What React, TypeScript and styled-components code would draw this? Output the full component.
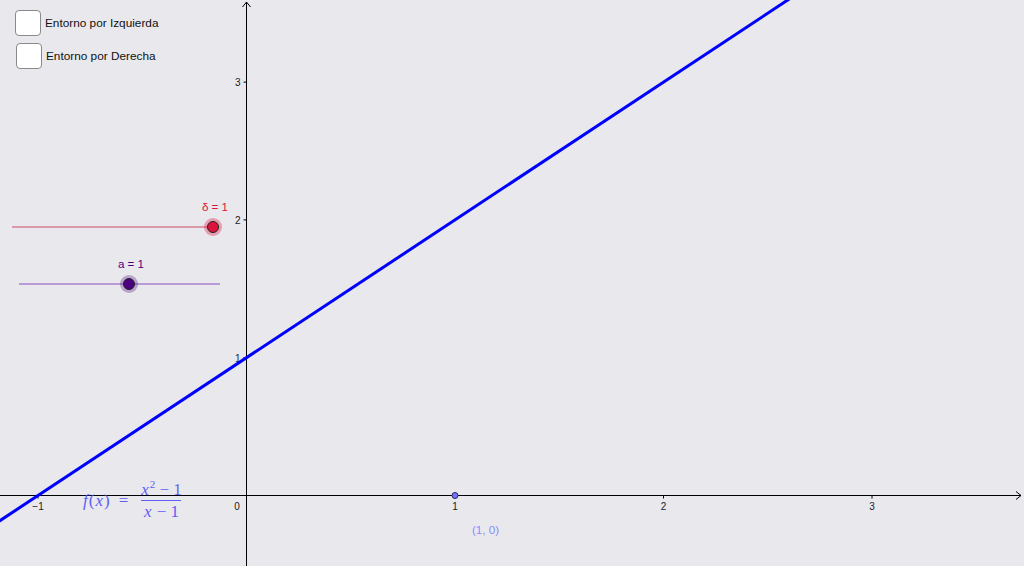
import React from 'react';
import styled, { createGlobalStyle } from 'styled-components';

const GlobalStyle = createGlobalStyle`
  html, body {
    margin: 0;
    padding: 0;
    background: #e9e8ed;
    overflow: hidden;
  }
  body {
    font-family: "Liberation Sans", Arial, sans-serif;
  }
`;

const W = 1024;
const H = 566;
const ox = 246.5;
const oy = 495.5;
const sx = 208.5;
const sy = 137.8;
const px = (x: number) => ox + x * sx;
const py = (y: number) => oy - y * sy;

const Canvas = styled.div`
  position: relative;
  width: ${W}px;
  height: ${H}px;
  background: #e9e8ed;
  overflow: hidden;
`;

const Graph = styled.svg`
  position: absolute;
  left: 0;
  top: 0;
  font-family: "Liberation Sans", Arial, sans-serif;
`;

const CheckList = styled.div`
  position: absolute;
  left: 15px;
  top: 10px;
  display: flex;
  flex-direction: column;
  gap: 7px;
`;

const CheckRow = styled.label<{ $shift?: number }>`
  display: flex;
  align-items: center;
  gap: 4px;
  margin-left: ${(p) => p.$shift ?? 0}px;
  font-size: 11.8px;
  color: #111;
`;

const Box = styled.span`
  width: 24px;
  height: 24px;
  border: 1.5px solid #8a8a8a;
  border-radius: 4px;
  background: #fff;
`;

const SliderBox = styled.div<{ $left: number; $top: number; $width: number }>`
  position: absolute;
  left: ${(p) => p.$left}px;
  top: ${(p) => p.$top}px;
  width: ${(p) => p.$width}px;
  height: 2px;
`;

const Track = styled.div<{ $color: string }>`
  width: 100%;
  height: 2px;
  background: ${(p) => p.$color};
`;

const Knob = styled.div<{ $fill: string; $halo: string }>`
  position: absolute;
  top: 1px;
  width: 12px;
  height: 12px;
  margin: -6px 0 0 -6px;
  border-radius: 50%;
  background: ${(p) => p.$fill};
  border: 1px solid #222;
  box-sizing: border-box;
  box-shadow: 0 0 0 3px ${(p) => p.$halo};
`;

const SliderLabel = styled.div<{ $color: string }>`
  position: absolute;
  top: -26px;
  transform: translateX(-50%);
  font-size: 11.6px;
  white-space: nowrap;
  color: ${(p) => p.$color};
`;

const Formula = styled.div`
  position: absolute;
  left: 82px;
  top: 481px;
  display: flex;
  align-items: center;
  font-family: "Liberation Serif", "DejaVu Serif", serif;
  font-size: 17px;
  color: #5f5ff4;
`;

const Var = styled.span`
  font-style: italic;
  margin: 0 1px;
`;

const Eq = styled.span`
  margin: 0 10px 0 9px;
`;

const Fraction = styled.span`
  display: inline-flex;
  flex-direction: column;
  align-items: center;
`;

const Num = styled.span`
  padding: 0 2px 2px;
  line-height: 17px;
`;

const Den = styled.span`
  border-top: 1px solid #5f5ff4;
  padding: 2px 2px 0;
  line-height: 17px;
`;

const Sup = styled.sup`
  font-size: 11px;
  font-style: normal;
  vertical-align: 7px;
  line-height: 0;
`;

const PointLabel = styled.div`
  position: absolute;
  left: 472px;
  top: 523px;
  font-size: 11.6px;
  color: #8a8aff;
`;

type SliderProps = {
  left: number;
  top: number;
  width: number;
  pos: number;
  label: string;
  color: string;
  track: string;
  halo: string;
};

const Slider: React.FC<SliderProps> = ({ left, top, width, pos, label, color, track, halo }) => (
  <SliderBox $left={left} $top={top} $width={width}>
    <Track $color={track} />
    <Knob $fill={color} $halo={halo} style={{ left: pos * width }} />
    <SliderLabel $color={color} style={{ left: pos * width + 2 }}>
      {label}
    </SliderLabel>
  </SliderBox>
);

const xTicks = [-1, 1, 2, 3];
const yTicks = [1, 2, 3];

const App: React.FC = () => {
  return (
    <>
      <GlobalStyle />
      <Canvas>
        <Graph width={W} height={H} viewBox={`0 0 ${W} ${H}`}>
          {/* axes */}
          <line x1={0} y1={oy} x2={1021} y2={oy} stroke="#000" strokeWidth={1} />
          <polyline points={`1016,${oy - 4} 1021,${oy} 1016,${oy + 4}`} fill="none" stroke="#000" strokeWidth={1} />
          <line x1={ox} y1={H} x2={ox} y2={2} stroke="#000" strokeWidth={1} />
          <polyline points={`${ox - 4},7 ${ox},2 ${ox + 4},7`} fill="none" stroke="#000" strokeWidth={1} />

          {xTicks.map((t) => (
            <g key={`x${t}`}>
              <line x1={px(t)} y1={oy} x2={px(t)} y2={oy + 3} stroke="#000" strokeWidth={1} />
              <text x={px(t)} y={oy + 14} fontSize={10} textAnchor="middle" fill="#222">
                {t < 0 ? `\u2212${-t}` : t}
              </text>
            </g>
          ))}
          <text x={237} y={oy + 14} fontSize={10} textAnchor="middle" fill="#222">
            0
          </text>
          {yTicks.map((t) => (
            <g key={`y${t}`}>
              <line x1={ox - 3} y1={py(t)} x2={ox} y2={py(t)} stroke="#000" strokeWidth={1} />
              <text x={ox - 6} y={py(t) + 4} fontSize={10} textAnchor="end" fill="#222">
                {t}
              </text>
            </g>
          ))}

          {/* f(x) = x + 1 with hole at x = 1 */}
          <line
            x1={px(-1.3)}
            y1={py(-0.3)}
            x2={px(2.75)}
            y2={py(3.75)}
            stroke="#0000ff"
            strokeWidth={3}
          />

          <circle cx={px(1)} cy={oy} r={3} fill="#7373ff" stroke="#2a2a5c" strokeWidth={1} />
        </Graph>

        <CheckList>
          <CheckRow>
            <Box />
            Entorno por Izquierda
          </CheckRow>
          <CheckRow $shift={1}>
            <Box />
            Entorno por Derecha
          </CheckRow>
        </CheckList>

        <Slider
          left={12}
          top={226}
          width={201}
          pos={1}
          label="δ = 1"
          color="#dc143c"
          track="#dc9aa8"
          halo="rgba(220, 20, 60, 0.35)"
        />
        <Slider
          left={19}
          top={283}
          width={201}
          pos={0.547}
          label="a = 1"
          color="#4b0082"
          track="#b89ad6"
          halo="rgba(75, 0, 130, 0.3)"
        />

        <Formula>
          <Var>f</Var>(<Var>x</Var>)
          <Eq>=</Eq>
          <Fraction>
            <Num>
              <Var>x</Var>
              <Sup>2</Sup> − 1
            </Num>
            <Den>
              <Var>x</Var> − 1
            </Den>
          </Fraction>
        </Formula>

        <PointLabel>(1, 0)</PointLabel>
      </Canvas>
    </>
  );
};

export default App;
